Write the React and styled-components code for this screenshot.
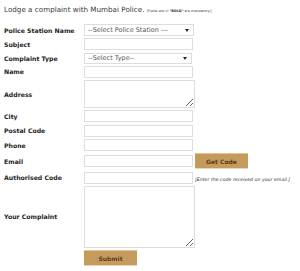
import styled, { createGlobalStyle } from 'styled-components'

const Global = createGlobalStyle`
    html, body{
        margin: 0;
        padding: 0;
        background: #fff;
    }
    body{
        font-family: "DejaVu Sans", Verdana, sans-serif;
        color: #222;
        font-size: 6px;
    }
`

const Page = styled.div`
    width: 300px;
    height: 271px;
    padding: 5px 4px 0;
    box-sizing: border-box;
    overflow: hidden;
`

const Intro = styled.p`
    margin: 0 0 8px;
    font-size: 7.2px;
    line-height: 10px;
    color: #3a3a3a;
    small{
        font-size: 3.4px;
        color: #333;
        b{ font-weight: bold; }
    }
`

const Form = styled.form`
    display: grid;
    grid-template-columns: 80px auto;
    row-gap: 2.3px;
    align-items: center;
`

const Label = styled.label`
    font-size: 6.2px;
    font-weight: bold;
    color: #1e1e1e;
    white-space: nowrap;
`

const Field = styled.div`
    display: flex;
    align-items: center;
    gap: 2px;
`

const Input = styled.input`
    box-sizing: border-box;
    display: block;
    width: ${p => p.$w || 109}px;
    height: 12px;
    border: 1px solid #ddd;
    padding: 0 3px;
    font-size: 6.3px;
    outline: none;
`

const Area = styled.textarea`
    box-sizing: border-box;
    width: 111px;
    height: ${p => p.$h}px;
    border: 1px solid #ddd;
    padding: 2px;
    font-size: 6.3px;
    font-family: inherit;
    outline: none;
    resize: both;
    display: block;
`

const SelectWrap = styled.div`
    position: relative;
    width: ${p => p.$w}px;
    height: ${p => p.$h}px;
    select{
        display: block;
        box-sizing: border-box;
        width: 100%;
        height: 100%;
        appearance: none;
        border: 1px solid #ddd;
        border-radius: 0;
        background: #fff;
        padding: 0 0 0 3px;
        font-size: 6.5px;
        font-family: inherit;
        color: #555;
        outline: none;
    }
    &::after{
        content: '';
        position: absolute;
        right: 5px;
        top: 50%;
        margin-top: -1px;
        border-left: 2px solid transparent;
        border-right: 2px solid transparent;
        border-top: 3px solid #222;
        pointer-events: none;
    }
`

const Button = styled.button`
    box-sizing: border-box;
    display: block;
    width: ${p => p.$w}px;
    height: 16px;
    border: none;
    border-top: 1px solid #e2c48e;
    border-bottom: 1px solid #e9d7b4;
    background: #c59b5d;
    color: #5b3b19;
    font-family: inherit;
    font-size: 6px;
    font-weight: bold;
    padding: 0;
    cursor: pointer;
`

const Hint = styled.span`
    font-size: 4.7px;
    font-style: italic;
    color: #333;
    white-space: nowrap;
    margin-top: 3px;
`

const Spacer = styled.div``

const App = () => {
    return (
        <Page>
            <Global />
            <Intro>
                Lodge a complaint with Mumbai Police. <small>[Fields are in <b>"BOLD"</b> are mandatory.]</small>
            </Intro>
            <Form onSubmit={e => e.preventDefault()}>
                <Label>Police Station Name</Label>
                <SelectWrap $w={110} $h={12}>
                    <select defaultValue="">
                        <option value="">--Select Police Station ---</option>
                    </select>
                </SelectWrap>

                <Label>Subject</Label>
                <Input $w={109} />

                <Label>Complaint Type</Label>
                <SelectWrap $w={108} $h={11}>
                    <select defaultValue="">
                        <option value="">--Select Type--</option>
                    </select>
                </SelectWrap>

                <Label>Name</Label>
                <Input />

                <Label>Address</Label>
                <Area $h={28} />

                <Label>City</Label>
                <Input />

                <Label>Postal Code</Label>
                <Input />

                <Label>Phone</Label>
                <Input />

                <Label>Email</Label>
                <Field>
                    <Input />
                    <Button type="button" $w={53}>Get Code</Button>
                </Field>

                <Label>Authorised Code</Label>
                <Field>
                    <Input />
                    <Hint>[Enter the code received on your email.]</Hint>
                </Field>

                <Label>Your Complaint</Label>
                <Area $h={62} />

                <Spacer />
                <Field>
                    <Button type="submit" $w={53}>Submit</Button>
                </Field>
            </Form>
        </Page>
    )
}

export default App
